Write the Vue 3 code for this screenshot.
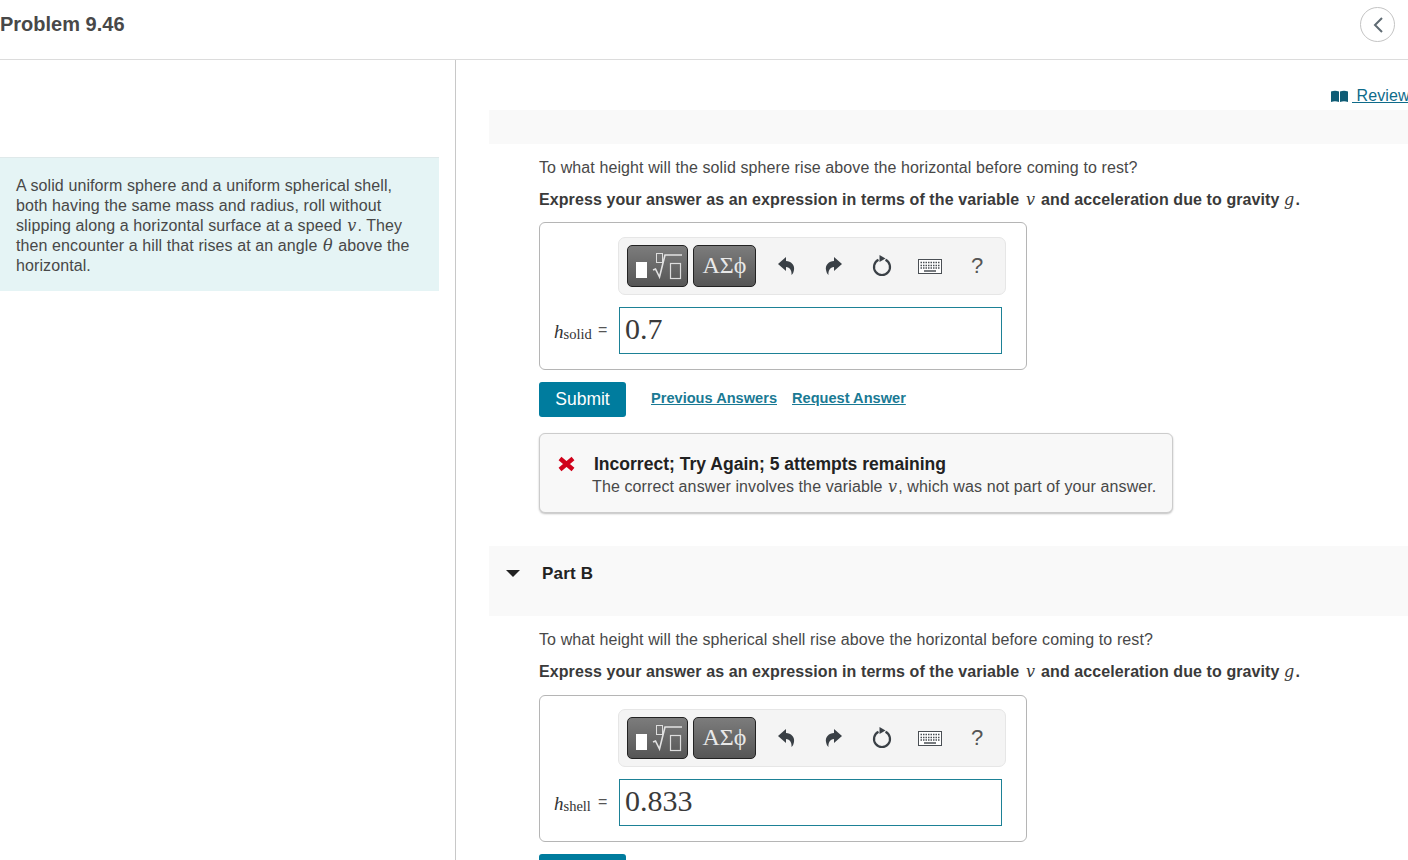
<script setup>
const parts = [
  {
    id: 'a',
    question: 'To what height will the solid sphere rise above the horizontal before coming to rest?',
    sub: 'solid',
    value: '0.7',
    feedback: true,
  },
  {
    id: 'b',
    title: 'Part B',
    question: 'To what height will the spherical shell rise above the horizontal before coming to rest?',
    sub: 'shell',
    value: '0.833',
    feedback: false,
  },
]
</script>

<template>
  <div class="page">
    <header class="top">
      <h1 class="title">Problem 9.46</h1>
      <button class="back" aria-label="Collapse">
        <svg width="12" height="18" viewBox="0 0 12 18"><path d="M10 2 3 9l7 7" fill="none" stroke="#5f6b73" stroke-width="2"/></svg>
      </button>
    </header>
    <div class="body">
      <aside class="side">
        <div class="intro">
          A solid uniform sphere and a uniform spherical shell, both having the same mass and radius, roll without slipping along a horizontal surface at a speed <i class="m">v</i>. They then encounter a hill that rises at an angle <i class="m">θ</i> above the horizontal.
        </div>
      </aside>
      <main class="main">
        <div class="review-row">
          <a class="review">
            <svg width="17" height="12" viewBox="0 0 17 12"><path d="M0 1.500 Q4 0 8 1.500V12Q4 10.500 0 12ZM9 1.500Q13 0 17 1.500V12Q13 10.500 9 12Z" fill="#0f5c75"/></svg>
            <span class="review-text">&nbsp;Review</span>
          </a>
        </div>
        <section v-for="p in parts" :key="p.id" class="part" :class="'part-' + p.id">
          <div class="band">
            <template v-if="p.title">
              <span class="caret"></span>
              <span class="part-title">{{ p.title }}</span>
            </template>
          </div>
          <div class="content">
            <p class="q">{{ p.question }}</p>
            <p class="express">Express your answer as an expression in terms of the variable <i class="m reg">v</i> and acceleration due to gravity <i class="m reg g">g</i>.</p>
            <div class="answer">
              <div class="toolbar">
                <button class="tool t1" aria-label="Templates">
                  <svg width="56" height="32" viewBox="0 0 56 32">
                    <rect x="6" y="12" width="11" height="16" fill="#fff"/>
                    <rect x="26.500" y="3.500" width="6" height="9" fill="none" stroke="#ddd"/>
                    <path d="M23 20l2.500-1 4 8 5.500-22h17" fill="none" stroke="#e2e2e2" stroke-width="1.600"/>
                    <rect x="40.500" y="13.500" width="10" height="15" fill="none" stroke="#ddd" stroke-width="1.200"/>
                  </svg>
                </button>
                <button class="tool t2">ΑΣϕ</button>
                <span class="ico">
                  <svg width="18" height="20" viewBox="0 0 18 20"><path d="M1 8 9 1v4c5 0 9 4 8 9-.5 2-1 4-2.500 5 .5-4-1.500-8-5.500-8v4Z" fill="#3a4046"/></svg>
                </span>
                <span class="ico">
                  <svg width="18" height="20" viewBox="0 0 18 20"><path d="M17 8 9 1v4c-5 0-9 4-8 9 .5 2 1 4 2.500 5-.5-4 1.500-8 5.500-8v4Z" fill="#3a4046"/></svg>
                </span>
                <span class="ico">
                  <svg width="20" height="22" viewBox="0 0 20 22"><path d="M6.500 4.800a8 8 0 1 0 7 0" fill="none" stroke="#3a4046" stroke-width="2.200"/><path d="M7.500 0l6 3.500-6 3.500Z" fill="#3a4046"/></svg>
                </span>
                <span class="ico">
                  <svg width="24" height="15" viewBox="0 0 24 15">
                    <rect x=".5" y=".5" width="23" height="14" fill="#fff" stroke="#4a4f54"/>
                    <path d="M2.500 3.500h19M2.500 6.500h19M2.500 9h19" stroke="#4a4f54" stroke-width="1.500" stroke-dasharray="1.500 1"/>
                    <path d="M6 12h12" stroke="#4a4f54" stroke-width="1.500"/>
                  </svg>
                </span>
                <span class="ico help">?</span>
              </div>
              <div class="entry">
                <span class="lhs"><i class="h">h</i><span class="sub">{{ p.sub }}</span></span>
                <span class="eq">=</span>
                <div class="field">{{ p.value }}</div>
              </div>
            </div>
            <div class="actions">
              <button class="submit">Submit</button>
              <template v-if="p.feedback">
                <a class="link first">Previous Answers</a>
                <a class="link">Request Answer</a>
              </template>
            </div>
            <div v-if="p.feedback" class="feedback">
              <svg class="x" width="17" height="16" viewBox="0 0 17 16"><path d="M2 2.500 15 13.500M15 2.500 2 13.500" stroke="#d0021b" stroke-width="4.400"/></svg>
              <div>
                <div class="fb-head">Incorrect; Try Again; 5 attempts remaining</div>
                <div class="fb-text">The correct answer involves the variable <i class="m">v</i>, which was not part of your answer.</div>
              </div>
            </div>
          </div>
        </section>
      </main>
    </div>
  </div>
</template>

<style>
html, body { margin: 0; overflow: hidden; background: #fff; }
</style>

<style scoped>
.page {
  width: 1408px;
  height: 860px;
  overflow: hidden;
  display: flex;
  flex-direction: column;
  font-family: "Liberation Sans", Arial, sans-serif;
  font-size: 16px;
  color: #333;
}
.top {
  flex: none;
  border-bottom: 1px solid #dcdcdc;
  display: flex;
  align-items: flex-start;
  justify-content: space-between;
  padding: 7px 13px 0 0;
  box-sizing: border-box;
  height: 60px;
}
.title {
  margin: 0;
  font-size: 20px;
  font-weight: 700;
  color: #484848;
  line-height: 35px;
}
.back {
  width: 35px;
  height: 35px;
  border: 1px solid #c4c4c4;
  border-radius: 50%;
  background: #fff;
  padding: 0;
  display: flex;
  align-items: center;
  justify-content: center;
}
.body { flex: 1; display: flex; min-height: 0; }
.side {
  width: 456px;
  box-sizing: border-box;
  flex: none;
  border-right: 1px solid #c8c8c8;
  padding-top: 97px;
}
.intro {
  width: 439px;
  box-sizing: border-box;
  background: #e5f4f5;
  border-top: 1px solid #dfe9ea;
  padding: 18px 24px 16px 16px;
  line-height: 20px;
  height: 134px;
  color: #484848;
  letter-spacing: .1px;
}
.m { font-family: "DejaVu Serif", serif; font-style: italic; font-size: 16px; line-height: 0; margin: 0 1px; }
.reg { font-weight: 400; margin: 0 1.500px 0 2px; }
.g { margin: 0 1px 0 0; }
.main { flex: 1; min-width: 0; padding-left: 33px; overflow: hidden; }
.review-row {
  height: 50px;
  padding-left: 842px;
  padding-top: 26px;
  box-sizing: border-box;
  white-space: nowrap;
}
.review {
  display: inline-flex;
  align-items: center;
  height: 19px;
  color: #0f6b8a;
  text-decoration: underline;
}
.review-text { margin-left: 4px; letter-spacing: .1px; }
.band { background: #f9f9f9; height: 70px; display: flex; align-items: center; position: relative; }
.part-a .band { height: 34px; }
.caret {
  position: absolute;
  left: 17px;
  top: 24px;
  width: 0;
  height: 0;
  border-left: 7px solid transparent;
  border-right: 7px solid transparent;
  border-top: 7px solid #222;
}
.part-title { margin-left: 53px; font-weight: 700; font-size: 17px; letter-spacing: .2px; color: #222; position: relative; top: -7px; }
.content { padding: 14px 0 0 50px; }
.q { margin: 0; line-height: 19px; color: #484848; white-space: nowrap; letter-spacing: .105px; }
.express { margin: 13px 0 0; line-height: 19px; font-weight: 700; color: #3a3a3a; white-space: nowrap; letter-spacing: .09px; }
.answer {
  width: 488px;
  height: 148px;
  box-sizing: border-box;
  margin-top: 13px;
  border: 1px solid #b5b5b5;
  border-radius: 6px;
  padding: 14px 24px 0 14px;
  background: #fff;
}
.part-b .answer { margin-top: 14px; height: 147px; padding-top: 13px; }
.toolbar {
  width: 388px;
  height: 58px;
  margin-left: 64px;
  box-sizing: border-box;
  background: #f4f4f4;
  border: 1px solid #e6e6e6;
  border-radius: 7px;
  display: flex;
  align-items: center;
  padding-left: 8px;
}
.tool {
  height: 42px;
  box-sizing: border-box;
  border: 1px solid #222;
  border-radius: 5px;
  background: linear-gradient(#7c7c7c, #565656);
  color: #e8e8e8;
  padding: 0;
  display: flex;
  align-items: center;
  justify-content: center;
  font-family: "Liberation Serif", serif;
  font-size: 24px;
}
.t1 { width: 61px; }
.t2 { width: 63px; margin-left: 5px; padding-bottom: 2px; }
.ico { width: 48px; display: flex; align-items: center; justify-content: center; }
.t2 + .ico { margin-left: 6px; }
.help { color: #555; font-size: 22px; margin-left: -1px; }
.entry { display: flex; align-items: center; margin-top: 12px; }
.lhs { width: 44px; color: #333; font-family: "Liberation Serif", serif; white-space: nowrap; margin-top: 2px; }
.h { font-size: 19px; font-family: "Liberation Serif", serif; }
.sub { font-size: 14.500px; position: relative; top: 1px; }
.eq { width: 21px; color: #555; font-size: 16px; margin-top: -2px; }
.field {
  width: 383px;
  height: 47px;
  box-sizing: border-box;
  border: 1px solid #1d8196;
  padding-left: 5px;
  font-family: "Liberation Serif", serif;
  font-size: 30px;
  line-height: 41px;
  color: #3a3a3a;
}
.actions { display: flex; align-items: center; margin-top: 12px; }
.submit {
  width: 87px;
  height: 35px;
  border: 0;
  border-radius: 3px;
  background: #007c9e;
  color: #fff;
  font: 17.500px "Liberation Sans", Arial, sans-serif;
  padding: 0;
}
.link {
  font-size: 14.600px;
  font-weight: 700;
  color: #1a7a94;
  text-decoration: underline;
  margin: 0 0 3px 15px;
}
.first { margin-left: 25px; }
.feedback {
  width: 634px;
  height: 80px;
  box-sizing: border-box;
  margin: 16px 0 33px;
  border: 1px solid #ccc;
  border-radius: 6px;
  background: #f8f8f8;
  box-shadow: 0 1px 2px rgba(0, 0, 0, .25);
  display: flex;
  padding: 20px 0 0 18px;
  gap: 17px;
}
.x { margin-top: 2px; flex: none; }
.fb-head { font-size: 17.550px; font-weight: 700; color: #222; line-height: 21px; margin-left: 2px; }
.fb-text { color: #484848; line-height: 24px; white-space: nowrap; letter-spacing: .105px; }
</style>
